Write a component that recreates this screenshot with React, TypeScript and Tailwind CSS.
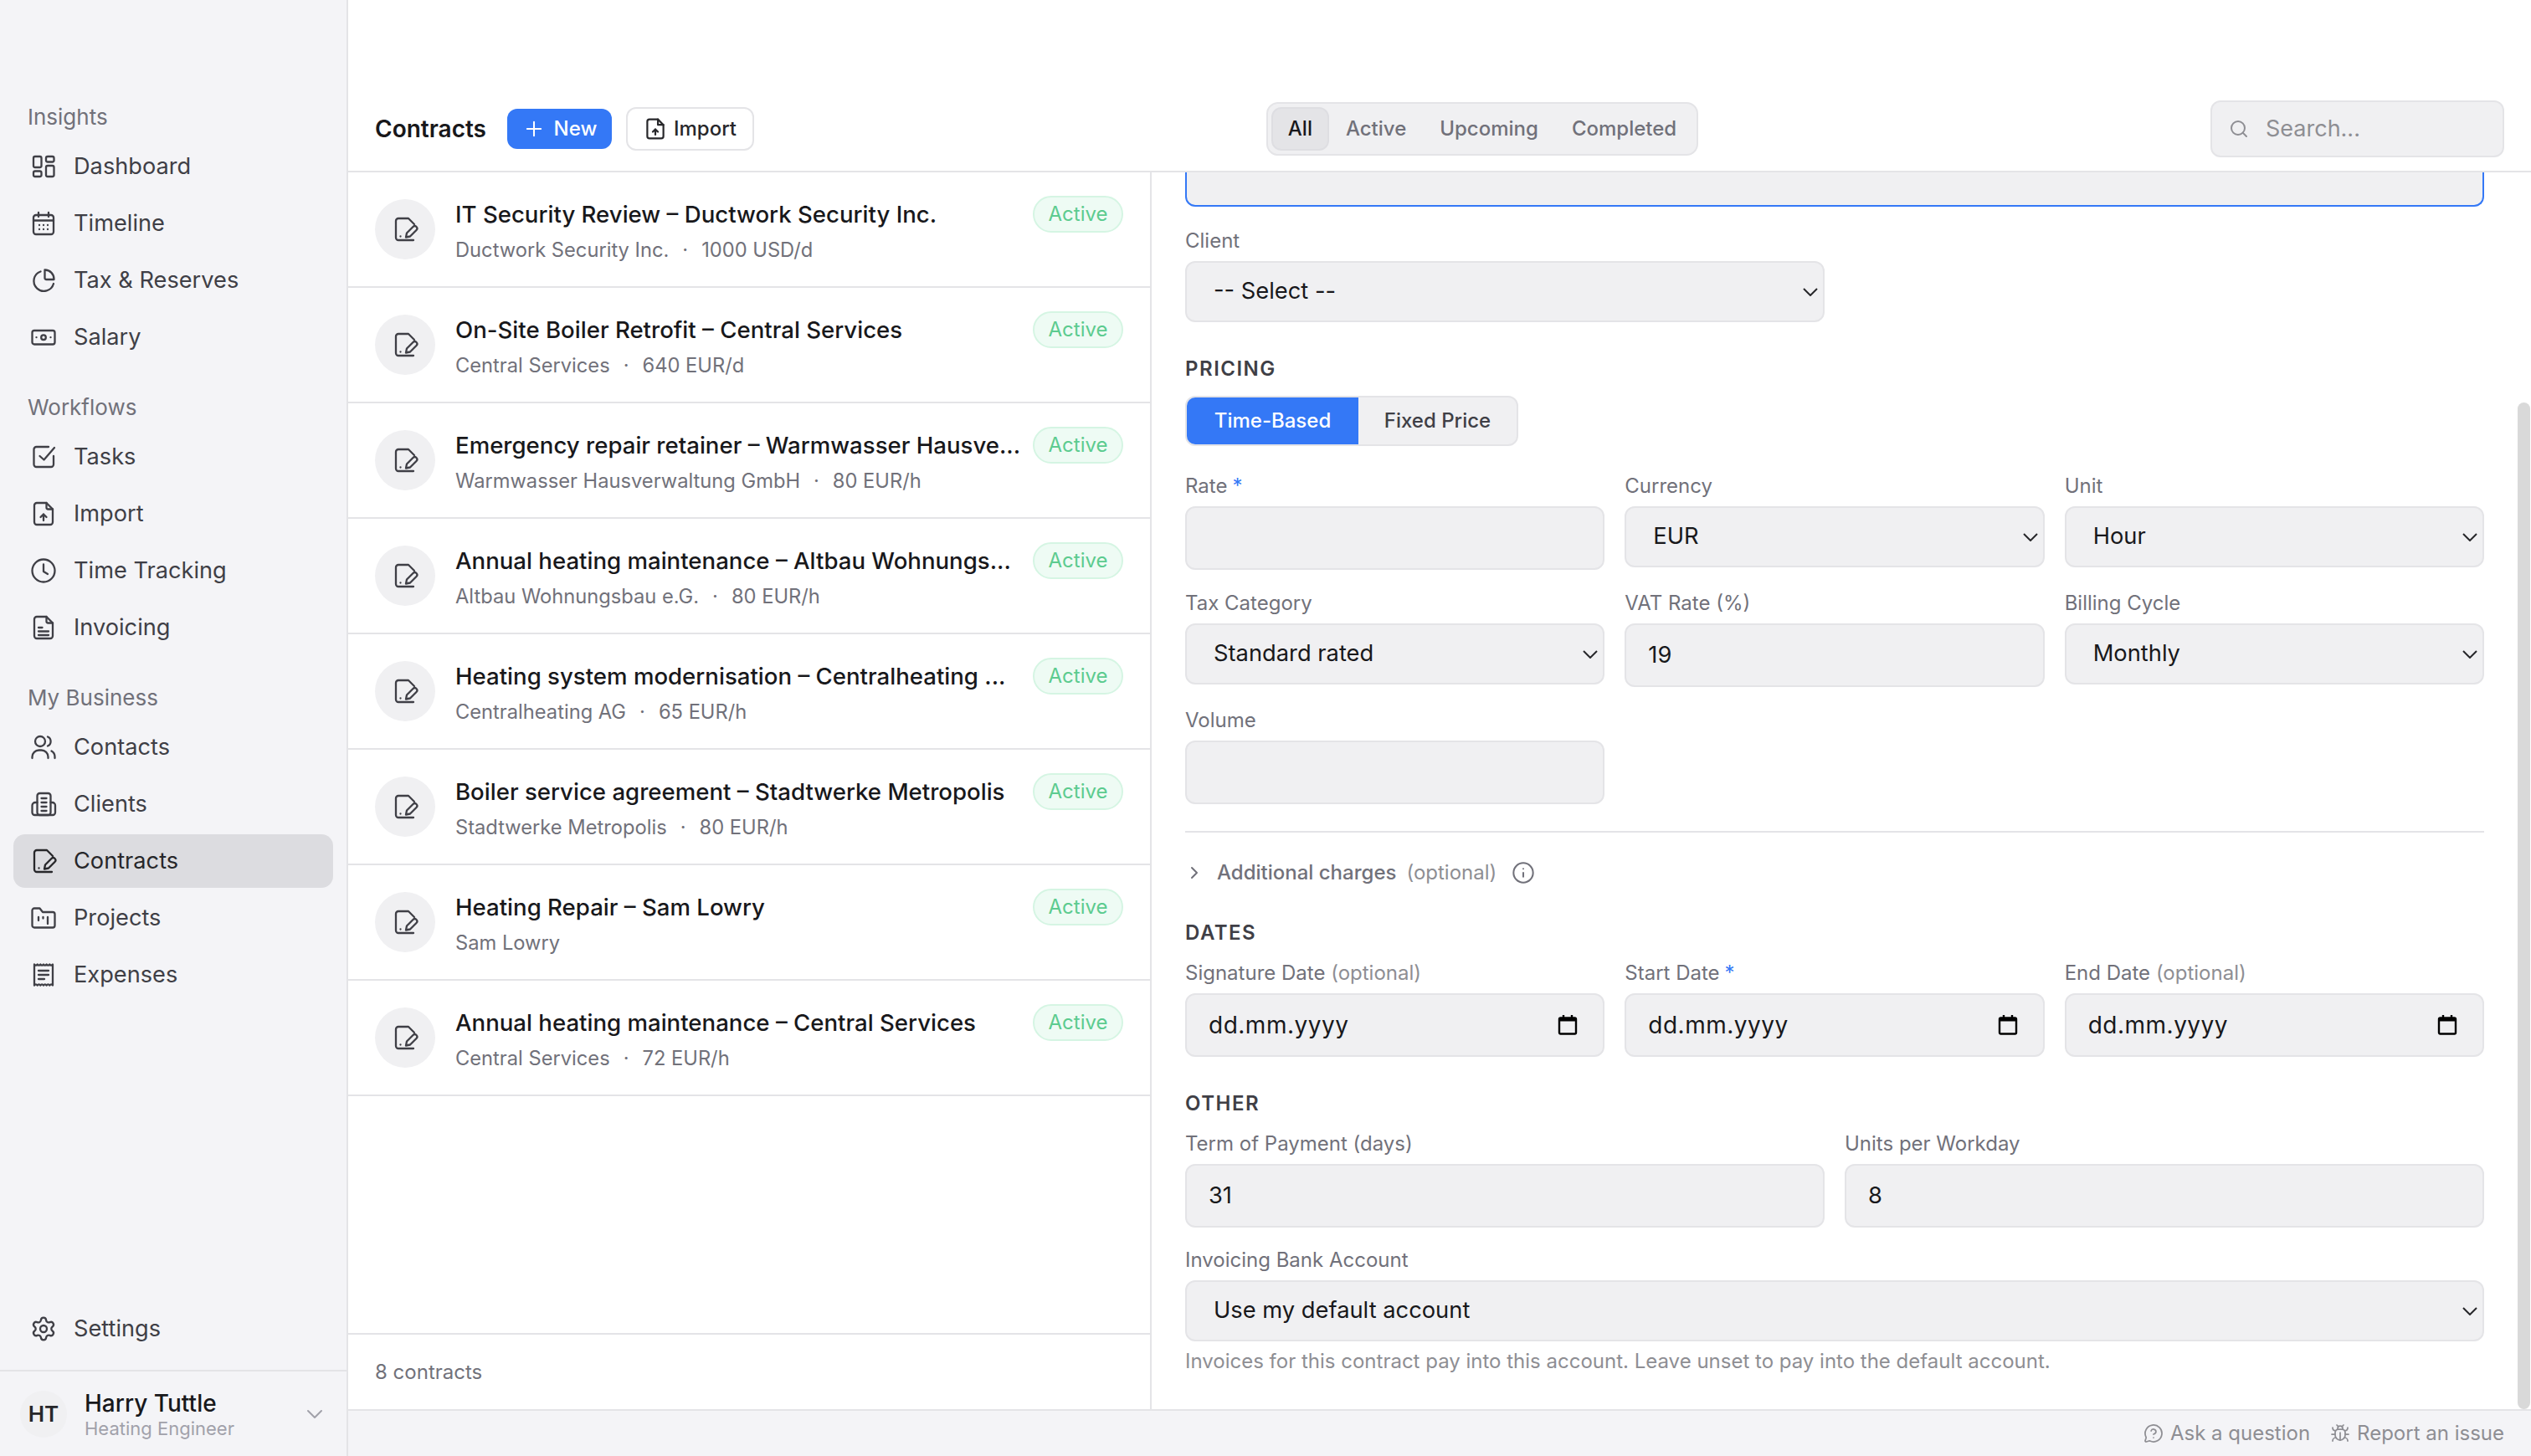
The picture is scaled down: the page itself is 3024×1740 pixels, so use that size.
import React from 'react';
import { ChevronDown, ChevronRight, Plus, Search, Info, Settings, MessageCircleQuestion, Bug } from 'lucide-react';

type IconProps = { className?: string };

const Svg = ({ className = '', children }: IconProps & { children: React.ReactNode }) => (
  <svg
    viewBox="0 0 32 32"
    fill="none"
    stroke="currentColor"
    strokeWidth="2.3"
    strokeLinecap="round"
    strokeLinejoin="round"
    className={`h-8 w-8 shrink-0 ${className}`}
  >
    {children}
  </svg>
);

const DashboardIcon = () => (
  <Svg>
    <rect x="4" y="4" width="9.5" height="13" rx="2" />
    <rect x="19" y="4" width="9.5" height="6.5" rx="2" />
    <rect x="4" y="21.5" width="9.5" height="6.5" rx="2" />
    <rect x="19" y="15" width="9.5" height="13" rx="2" />
  </Svg>
);

const TimelineIcon = () => (
  <Svg>
    <rect x="4" y="6" width="24" height="23" rx="3" />
    <path d="M4 12.5h24M10 3v5M22 3v5" />
    <path d="M11 18h.01M16 18h.01M21 18h.01M11 23h.01M16 23h.01M21 23h.01" />
  </Svg>
);

const PieIcon = () => (
  <Svg>
    <path d="M12.5 5.5A12 12 0 1 0 28 20" />
    <path d="M17.5 3.5a11 11 0 0 1 11 11.5h-9a2 2 0 0 1-2-2z" />
  </Svg>
);

const SalaryIcon = () => (
  <Svg>
    <rect x="2.5" y="8" width="27" height="16.5" rx="2.5" />
    <circle cx="16" cy="16.2" r="2.8" />
    <path d="M7.5 16.2h.01M24.5 16.2h.01" />
  </Svg>
);

const TasksIcon = () => (
  <Svg>
    <path d="M22 4H7.500a3 3 0 0 0-3 3v18a3 3 0 0 0 3 3H25a3 3 0 0 0 3-3v-10" />
    <path d="M11.500 15l5 4.500L29 5" />
  </Svg>
);

const ImportIcon = () => (
  <Svg>
    <path d="M8 3h11.500L27 10.500V26a3 3 0 0 1-3 3H8a3 3 0 0 1-3-3V6a3 3 0 0 1 3-3z" />
    <path d="M19.500 3v5.500a2 2 0 0 0 2 2H27" />
    <path d="M16 24v-7.500M12.500 20l3.500-3.500 3.500 3.500" />
  </Svg>
);

const ClockIcon = () => (
  <Svg>
    <circle cx="16" cy="16" r="13.500" />
    <path d="M16 8.500V17l5 3" />
  </Svg>
);

const InvoiceIcon = () => (
  <Svg>
    <path d="M8 3h11.500L27 10.500V26a3 3 0 0 1-3 3H8a3 3 0 0 1-3-3V6a3 3 0 0 1 3-3z" />
    <path d="M19.500 3v5.500a2 2 0 0 0 2 2H27" />
    <path d="M10 16h4.500M10 20.500h12M10 25h12" />
  </Svg>
);

const ContactsIcon = () => (
  <Svg>
    <circle cx="12" cy="9" r="6" />
    <path d="M2.500 29v-1.500a8 8 0 0 1 8-8h3a8 8 0 0 1 8 8V29" />
    <path d="M21 3.500a6 6 0 0 1 0 11" />
    <path d="M25.500 20.500a8 8 0 0 1 4 7V29" />
  </Svg>
);

const ClientsIcon = () => (
  <Svg>
    <rect x="8.500" y="3" width="16" height="26" rx="3" />
    <path d="M8.500 14H6a3.500 3.500 0 0 0-3.500 3.500V26A3 3 0 0 0 5.500 29H27a3 3 0 0 0 3-3v-8.500A3.500 3.500 0 0 0 26.500 14h-2" />
    <path d="M13.500 9h6M13.500 14h6M13.500 19h6M13.500 24h6" />
  </Svg>
);

const ContractIcon = () => (
  <Svg>
    <path d="M27 10l-7-7H8a3 3 0 0 0-3 3v20a3 3 0 0 0 3 3h18" />
    <path d="M10.500 24.500h.01" />
    <path d="M17 25.500l1-5L25.500 13a2.800 2.800 0 0 1 4 4L22 24.500z" />
  </Svg>
);

const ProjectsIcon = () => (
  <Svg>
    <path d="M2.500 7A2.500 2.500 0 0 1 5 4.500h6.500L15 9h12a2.500 2.500 0 0 1 2.500 2.500V25a2.500 2.500 0 0 1-2.500 2.500H5A2.500 2.500 0 0 1 2.500 25z" />
    <path d="M10 15v4M15.500 15v1.500M21 15v8" />
  </Svg>
);

const ExpensesIcon = () => (
  <Svg>
    <path d="M5 3.500c1.200 1.500 2.500 1.500 3.700 0 1.200 1.500 2.400 1.500 3.600 0 1.200 1.500 2.400 1.500 3.700 0 1.200 1.500 2.400 1.500 3.600 0 1.200 1.500 2.500 1.500 3.700 0 1.200 1.500 2.400 1.500 3.700 0v25c-1.300-1.500-2.500-1.500-3.700 0-1.200-1.500-2.500-1.500-3.700 0-1.200-1.500-2.400-1.500-3.600 0-1.300-1.500-2.500-1.500-3.700 0-1.200-1.500-2.400-1.500-3.600 0-1.200-1.500-2.500-1.500-3.700 0z" />
    <path d="M10 11h12M10 16h12M10 21h7" />
  </Svg>
);

const SelectChevron = () => (
  <svg viewBox="0 0 18 10" fill="none" stroke="currentColor" strokeWidth="2" className="h-[10px] w-[18px] shrink-0 text-[#27272a]">
    <path d="M1 1l8 8 8-8" />
  </svg>
);

const DateGlyph = () => (
  <svg viewBox="0 0 24 24" className="h-6 w-6 shrink-0 text-black" fill="none" stroke="currentColor" strokeWidth="2.4">
    <rect x="2" y="3.500" width="20" height="19" rx="1.500" />
    <path d="M2 5.500h20" strokeWidth="4" />
    <path d="M7 0v3M17 0v3" />
  </svg>
);

const navSections = [
  {
    label: 'Insights',
    items: [
      { name: 'Dashboard', icon: <DashboardIcon /> },
      { name: 'Timeline', icon: <TimelineIcon /> },
      { name: 'Tax & Reserves', icon: <PieIcon /> },
      { name: 'Salary', icon: <SalaryIcon /> },
    ],
  },
  {
    label: 'Workflows',
    items: [
      { name: 'Tasks', icon: <TasksIcon /> },
      { name: 'Import', icon: <ImportIcon /> },
      { name: 'Time Tracking', icon: <ClockIcon /> },
      { name: 'Invoicing', icon: <InvoiceIcon /> },
    ],
  },
  {
    label: 'My Business',
    items: [
      { name: 'Contacts', icon: <ContactsIcon /> },
      { name: 'Clients', icon: <ClientsIcon /> },
      { name: 'Contracts', icon: <ContractIcon />, active: true },
      { name: 'Projects', icon: <ProjectsIcon /> },
      { name: 'Expenses', icon: <ExpensesIcon /> },
    ],
  },
];

const contracts = [
  { title: 'IT Security Review – Ductwork Security Inc.', client: 'Ductwork Security Inc.', rate: '1000 USD/d' },
  { title: 'On-Site Boiler Retrofit – Central Services', client: 'Central Services', rate: '640 EUR/d' },
  { title: 'Emergency repair retainer – Warmwasser Hausve...', client: 'Warmwasser Hausverwaltung GmbH', rate: '80 EUR/h' },
  { title: 'Annual heating maintenance – Altbau Wohnungs...', client: 'Altbau Wohnungsbau e.G.', rate: '80 EUR/h' },
  { title: 'Heating system modernisation – Centralheating ...', client: 'Centralheating AG', rate: '65 EUR/h' },
  { title: 'Boiler service agreement – Stadtwerke Metropolis', client: 'Stadtwerke Metropolis', rate: '80 EUR/h' },
  { title: 'Heating Repair – Sam Lowry', client: 'Sam Lowry', rate: '' },
  { title: 'Annual heating maintenance – Central Services', client: 'Central Services', rate: '72 EUR/h' },
];

const NavItem = ({ name, icon, active }: { name: string; icon: React.ReactNode; active?: boolean }) => (
  <div
    className={`flex h-16 items-center gap-5 rounded-[14px] pl-5 text-[27.2px] ${
      active ? 'bg-[#dcdce0] text-[#27272a]' : 'text-[#3f3f46]'
    }`}
  >
    {icon}
    <span>{name}</span>
  </div>
);

const Sidebar = () => (
  <aside className="flex h-full w-[416px] shrink-0 flex-col border-r-2 border-[#e4e4e7] bg-[#f4f4f7]">
    <div className="flex-1 px-4 pt-[119px]">
      {navSections.map((section, i) => (
        <div key={section.label} className={i > 0 ? 'mt-[31px]' : ''}>
          <div className="mb-2 flex h-10 items-center pl-[17px] text-[26px] text-[#71717a]">{section.label}</div>
          <div className="flex flex-col gap-1">
            {section.items.map((item) => (
              <NavItem key={item.name} {...item} />
            ))}
          </div>
        </div>
      ))}
    </div>
    <div className="mb-[17px] px-4">
      <div className="flex h-16 items-center gap-5 pl-5 text-[27.2px] text-[#3f3f46]">
        <Settings className="h-8 w-8" strokeWidth={1.75} />
        <span>Settings</span>
      </div>
    </div>
    <div className="flex h-[103px] items-center border-t-2 border-[#e4e4e7] pl-6 pr-[22px]">
      <div className="flex h-14 w-14 items-center justify-center rounded-full bg-[#f0f0f2] text-[26px] font-semibold text-[#27272a]">HT</div>
      <div className="ml-[21px] flex-1">
        <div className="text-[28px] font-medium leading-[34px] text-[#18181b]">Harry Tuttle</div>
        <div className="text-[22px] leading-[26px] text-[#a1a1aa]">Heating Engineer</div>
      </div>
      <ChevronDown className="h-8 w-8 text-[#a1a1aa]" strokeWidth={1.5} />
    </div>
  </aside>
);

const Header = () => (
  <header className="flex h-[206px] shrink-0 items-center justify-between border-b-2 border-[#e4e4e7] bg-white px-8 pt-[104px]">
    <div className="flex items-center">
      <h1 className="text-[28px] font-semibold text-[#18181b]">Contracts</h1>
      <button className="ml-[25px] flex h-12 w-[125px] items-center justify-center gap-[10px] rounded-[12px] bg-[#3478f6] text-[24px] font-medium text-white">
        <Plus className="h-7 w-7" strokeWidth={1.75} />
        New
      </button>
      <button className="ml-[17px] flex h-[52px] w-[153px] items-center justify-center gap-2 rounded-[12px] border-2 border-[#e4e4e7] bg-white text-[24px] font-medium text-[#27272a]">
        <svg viewBox="0 0 32 32" fill="none" stroke="currentColor" strokeWidth="2.5" strokeLinecap="round" strokeLinejoin="round" className="h-7 w-7">
          <path d="M8 3h11.500L27 10.500V26a3 3 0 0 1-3 3H8a3 3 0 0 1-3-3V6a3 3 0 0 1 3-3z" />
          <path d="M19.500 3v7.500H27" />
          <path d="M16 24v-7.500M12.500 20l3.500-3.500 3.500 3.500" />
        </svg>
        Import
      </button>
    </div>
    <div className="flex h-16 items-center rounded-[14px] border-2 border-[#e4e4e7] bg-[#f0f0f2] p-1 text-[24px] font-medium text-[#71717a]">
      <div className="flex h-[52px] items-center rounded-[12px] border-2 border-[#dedee2] bg-[#e4e4e7] px-[18px] text-[#18181b]">All</div>
      <div className="px-5">Active</div>
      <div className="px-5">Upcoming</div>
      <div className="px-5">Completed</div>
    </div>
    <div className="flex h-[68px] w-[351px] items-center gap-5 rounded-[12px] border-2 border-[#e4e4e7] bg-[#f0f0f2] pl-[20px] text-[27px] text-[#8e8e93]">
      <Search className="h-6 w-6" strokeWidth={2} />
      Search...
    </div>
  </header>
);

const ContractRow = ({ title, client, rate }: { title: string; client: string; rate: string }) => (
  <div className="flex h-[138px] items-start border-b-2 border-[#e4e4e7] pl-8 pr-8 pt-[28px]">
    <div className="mt-1 flex h-[72px] w-[72px] shrink-0 items-center justify-center rounded-full bg-[#f0f0f2] text-[#3f3f46]">
      <ContractIcon />
    </div>
    <div className="ml-6 min-w-0 flex-1">
      <div className="flex h-[46px] items-center">
        <div className="whitespace-nowrap text-[27.6px] font-medium text-[#18181b]">{title}</div>
      </div>
      <div className="mt-[1px] flex h-[36px] items-center gap-4 text-[23.7px] text-[#71717a]">
        <span>{client}</span>
        {rate && <span>·</span>}
        {rate && <span>{rate}</span>}
      </div>
    </div>
    <div className="ml-[18px] flex h-[44px] w-[108px] shrink-0 items-center justify-center rounded-full border-2 border-[#d5f5e3] bg-[#eefbf4] text-[24px] text-[#5ccb8f]">
      Active
    </div>
  </div>
);

const ContractList = () => (
  <div className="flex h-full w-[960px] shrink-0 flex-col border-r-2 border-[#e4e4e7] bg-white">
    <div className="flex-1">
      {contracts.map((c) => (
        <ContractRow key={c.title} {...c} />
      ))}
    </div>
    <div className="flex h-[91px] items-center border-t-2 border-[#e4e4e7] pl-8 text-[24px] text-[#71717a]">8 contracts</div>
  </div>
);

const Label = ({ children, required }: { children: React.ReactNode; required?: boolean }) => (
  <div className="mb-2 flex h-8 items-center whitespace-pre text-[24px] text-[#71717a]">
    <span>{children}</span>
    {required && <span className="ml-[6px] text-[#3478f6]">*</span>}
  </div>
);

const Optional = () => <span className="text-[#8e8e93]"> (optional)</span>;

const TextField = ({ value }: { value?: string }) => (
  <div className="flex h-[76px] items-center rounded-[12px] border-2 border-[#e4e4e7] bg-[#f0f0f2] pl-[26px] text-[27.3px] text-[#18181b]">{value}</div>
);

const SelectField = ({ value }: { value: string }) => (
  <div className="flex h-[73px] items-center justify-between rounded-[12px] border-2 border-[#e4e4e7] bg-[#f0f0f2] pl-8 pr-[6px] text-[27.3px] text-[#18181b]">
    <span>{value}</span>
    <SelectChevron />
  </div>
);

const DateField = () => (
  <div className="flex h-[76px] items-center justify-between rounded-[12px] border-2 border-[#e4e4e7] bg-[#f0f0f2] pl-[26px] pr-[30px] text-[28px] tracking-[0.5px] text-[#18181b]">
    <span>dd.mm.yyyy</span>
    <DateGlyph />
  </div>
);

const SectionTitle = ({ children, className = '' }: { children: React.ReactNode; className?: string }) => (
  <h2 className={`flex h-8 items-center text-[24px] font-semibold tracking-[1.5px] text-[#3f3f46] ${className}`}>{children}</h2>
);

const ContractForm = () => (
  <div className="h-full flex-1 overflow-hidden bg-white pl-10 pr-14">
    <div className="h-[41px] rounded-b-[12px] border-2 border-t-0 border-[#3478f6] bg-[#f0f0f2]" />

    <div className="mt-[25px] w-[764px]">
      <Label>Client</Label>
      <SelectField value="-- Select --" />
    </div>

    <SectionTitle className="mt-10">PRICING</SectionTitle>
    <div className="mt-4 flex h-[60px] w-[398px] overflow-hidden rounded-[12px] border-2 border-[#e4e4e7] bg-[#f0f0f2] text-[24px] font-medium">
      <div className="flex w-[205px] items-center justify-center bg-[#3478f6] text-white">Time-Based</div>
      <div className="flex flex-1 items-center justify-center text-[#3f3f46]">Fixed Price</div>
    </div>

    <div className="mt-8 grid grid-cols-3 gap-x-6 gap-y-6">
      <div>
        <Label required>Rate</Label>
        <TextField />
      </div>
      <div>
        <Label>Currency</Label>
        <SelectField value="EUR" />
      </div>
      <div>
        <Label>Unit</Label>
        <SelectField value="Hour" />
      </div>
      <div>
        <Label>Tax Category</Label>
        <SelectField value="Standard rated" />
      </div>
      <div>
        <Label>VAT Rate (%)</Label>
        <TextField value="19" />
      </div>
      <div>
        <Label>Billing Cycle</Label>
        <SelectField value="Monthly" />
      </div>
      <div>
        <Label>Volume</Label>
        <TextField />
      </div>
    </div>

    <div className="mt-8 border-t-2 border-[#e4e4e7]" />

    <div className="mt-[30px] flex h-9 items-center text-[24px] text-[#71717a]">
      <ChevronRight className="-ml-[1px] h-6 w-6" strokeWidth={2} />
      <span className="ml-[15px] font-medium">Additional charges</span>
      <span className="ml-3 text-[#8e8e93]">(optional)</span>
      <Info className="ml-[18px] h-7 w-7" strokeWidth={1.75} />
    </div>

    <SectionTitle className="mt-[38px]">DATES</SectionTitle>
    <div className="mt-4 grid grid-cols-3 gap-x-6">
      <div>
        <Label>Signature Date<Optional /></Label>
        <DateField />
      </div>
      <div>
        <Label required>Start Date</Label>
        <DateField />
      </div>
      <div>
        <Label>End Date<Optional /></Label>
        <DateField />
      </div>
    </div>

    <SectionTitle className="mt-10">OTHER</SectionTitle>
    <div className="mt-4 grid grid-cols-2 gap-x-6">
      <div>
        <Label>Term of Payment (days)</Label>
        <TextField value="31" />
      </div>
      <div>
        <Label>Units per Workday</Label>
        <TextField value="8" />
      </div>
    </div>

    <div className="mt-[23px]">
      <Label>Invoicing Bank Account</Label>
      <SelectField value="Use my default account" />
    </div>
    <p className="mt-2 text-[24px] leading-8 text-[#8e8e93]">Invoices for this contract pay into this account. Leave unset to pay into the default account.</p>
  </div>
);

const StatusBar = () => (
  <footer className="flex h-[56px] shrink-0 items-center justify-end gap-6 border-t-2 border-[#e4e4e7] bg-[#f4f4f7] pr-8 text-[24px] text-[#8e8e93]">
    <div className="flex items-center gap-2">
      <MessageCircleQuestion className="h-6 w-6" strokeWidth={1.75} />
      Ask a question
    </div>
    <div className="flex items-center gap-2">
      <Bug className="h-6 w-6" strokeWidth={1.75} />
      Report an issue
    </div>
  </footer>
);

const App = () => (
  <div className="relative flex h-[1740px] w-[3024px] overflow-hidden bg-white font-['Inter',sans-serif]">
    <Sidebar />
    <main className="flex min-w-0 flex-1 flex-col">
      <Header />
      <div className="flex min-h-0 flex-1">
        <ContractList />
        <ContractForm />
      </div>
      <StatusBar />
    </main>
    {/* scrollbar thumb, overlaid on the form */}
    <div className="absolute right-[1px] top-[481px] h-[1203px] w-[15px] rounded-full bg-[#d9d9d9]" />
  </div>
);

export default App;
